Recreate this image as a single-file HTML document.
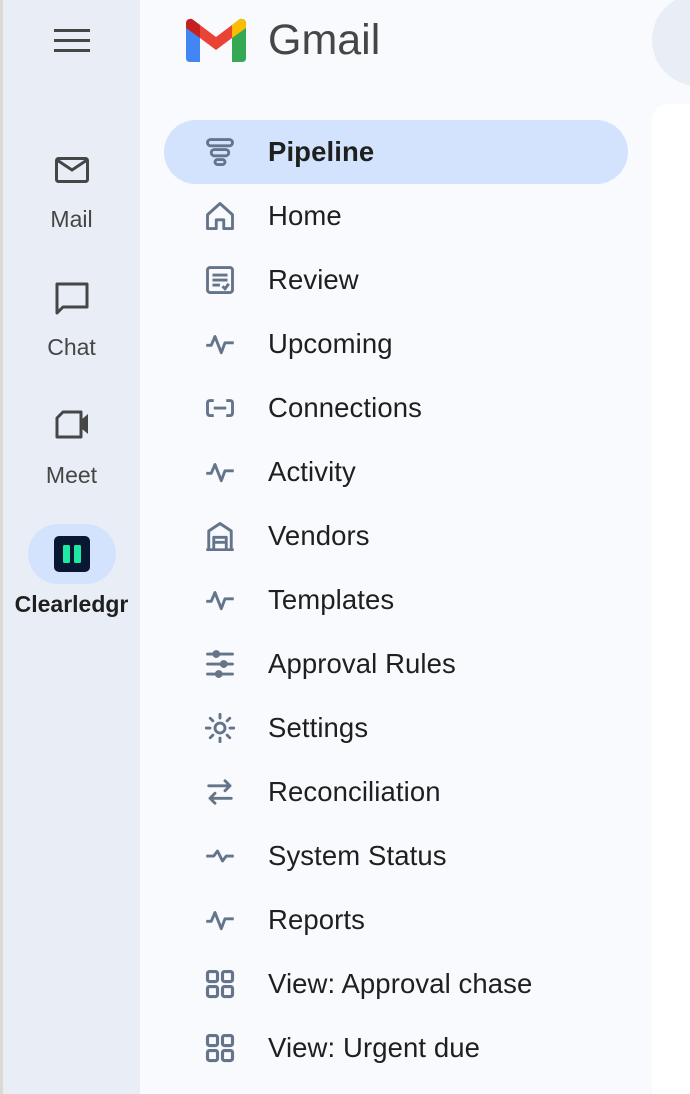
<!DOCTYPE html>
<html><head><style>
*{margin:0;padding:0;box-sizing:border-box}
html,body{width:690px;height:1094px;overflow:hidden}
body{background:#f8fafd;font-family:"Liberation Sans",Arial,sans-serif;position:relative}
.edge{position:absolute;left:0;top:0;width:3px;height:1094px;background:#ddd9d0}
.rail{position:absolute;left:3px;top:0;width:137px;height:1094px;background:#e9eef6}
.ri{position:absolute;left:3px;width:137px;text-align:center;color:#444746;font-size:23px}
.nav{position:absolute;left:164px;width:464px;height:64px;}
.nav svg{position:absolute;left:41px;top:17px}
.nav span{position:absolute;left:104px;top:16px;font-size:27.5px;color:#1f1f1f;letter-spacing:0.1px}
.act{background:#d3e3fd;border-radius:32px}
</style></head><body>
<div class="edge"></div><div class="rail"></div>
<svg style="position:absolute;left:54px;top:29px" width="36" height="24"><g fill="#444746"><rect x="0" y="0" width="36" height="3"/><rect x="0" y="10" width="36" height="3"/><rect x="0" y="20" width="36" height="3"/></g></svg>
<svg style="position:absolute;left:55px;top:157px" width="34" height="26" viewBox="0 0 34 26"><rect x="1.5" y="1.5" width="31" height="23" rx="2" fill="none" stroke="#444746" stroke-width="3"/><path d="M2 3 L17 13 L32 3" fill="none" stroke="#444746" stroke-width="3"/></svg>
<div class="ri" style="top:206px">Mail</div>
<svg style="position:absolute;left:55px;top:282px" width="34" height="34" viewBox="0 0 34 34"><path d="M2 2 H32 V25 H8 L2 31 Z" fill="none" stroke="#444746" stroke-width="3" stroke-linejoin="round"/></svg>
<div class="ri" style="top:334px">Chat</div>
<svg style="position:absolute;left:55px;top:410px" width="36" height="30" viewBox="0 0 36 30"><path d="M8 2 H26 V27 H2 V8 Z" fill="none" stroke="#444746" stroke-width="3" stroke-linejoin="round"/><path d="M26 10 L33 4 V24 L26 18Z" fill="#444746"/></svg>
<div class="ri" style="top:462px">Meet</div>
<div style="position:absolute;left:28px;top:524px;width:88px;height:60px;border-radius:30px;background:#d3e3fd"></div>
<svg style="position:absolute;left:54px;top:536px" width="36" height="36"><rect width="36" height="36" rx="5" fill="#0a1733"/><rect x="9" y="9" width="7" height="18" rx="1.5" fill="#1de9a5"/><rect x="20" y="9" width="7" height="18" rx="1.5" fill="#1de9a5"/></svg>
<div class="ri" style="top:591px;color:#1f1f1f;font-weight:bold;font-size:23px">Clearledgr</div>

<svg style="position:absolute;left:186px;top:18px" width="60" height="44" viewBox="0 0 60 44">
<path d="M0 6 Q0 0 6 1 L14 7 V44 H4 Q0 44 0 40Z" fill="#4285f4"/>
<path d="M46 7 L54 1 Q60 0 60 6 V40 Q60 44 56 44 H46Z" fill="#34a853"/>
<path d="M14 7 L30 19 L46 7 V20 L30 32 L14 20Z" fill="#ea4335"/>
<path d="M0 6 Q0 0 6 1 L14 7 V20 L0 10Z" fill="#c5221f"/>
<path d="M46 7 L54 1 Q60 0 60 6 V10 L46 20Z" fill="#fbbc04"/>
</svg>
<div style="position:absolute;left:268px;top:16px;font-size:43px;color:#444746">Gmail</div>
<div style="position:absolute;left:652px;top:-6px;width:92px;height:92px;border-radius:50%;background:#e9eef6"></div>
<div style="position:absolute;left:652px;top:104px;width:60px;height:990px;border-radius:16px 0 0 0;background:#fff"></div>

<div class="nav act" style="top:120px"><svg width="30" height="30" viewBox="0 0 24 24" fill="none" stroke="#64748b" stroke-width="2.3"><rect x="2" y="2" width="20" height="5" rx="2.5"/><rect x="5" y="10" width="14" height="5" rx="2.5"/><rect x="8" y="18" width="8" height="4" rx="2"/></svg><span style="font-weight:bold">Pipeline</span></div>
<div class="nav" style="top:184px"><svg width="30" height="30" viewBox="0 0 24 24" fill="none" stroke="#64748b" stroke-width="2.3" stroke-linejoin="round"><path d="M2 11 L12 2 L22 11 V22 H15 V15 H9 V22 H2Z"/></svg><span>Home</span></div>
<div class="nav" style="top:248px"><svg width="30" height="30" viewBox="0 0 24 24" fill="none" stroke="#64748b" stroke-width="2.3"><rect x="2" y="2" width="20" height="20" rx="2"/><path d="M6 8H18M6 12H18M6 16H12M14 17L16 19L19 15"/></svg><span>Review</span></div>
<div class="nav" style="top:312px"><svg width="30" height="30" viewBox="0 0 24 24" fill="none" stroke="#64748b" stroke-width="2.3" stroke-linejoin="round"><path d="M1 13H5L8 6L13 19L16 11H23"/></svg><span>Upcoming</span></div>
<div class="nav" style="top:376px"><svg width="30" height="30" viewBox="0 0 24 24" fill="none" stroke="#64748b" stroke-width="2.3"><path d="M7 6H4Q2 6 2 8V16Q2 18 4 18H7M17 6H20Q22 6 22 8V16Q22 18 20 18H17M7 12H17"/></svg><span>Connections</span></div>
<div class="nav" style="top:440px"><svg width="30" height="30" viewBox="0 0 24 24" fill="none" stroke="#64748b" stroke-width="2.3" stroke-linejoin="round"><path d="M1 13H5L8 6L13 19L16 11H23"/></svg><span>Activity</span></div>
<div class="nav" style="top:504px"><svg width="30" height="30" viewBox="0 0 24 24" fill="none" stroke="#64748b" stroke-width="2.3" stroke-linejoin="round"><path d="M3 22V8L12 2L21 8V22M1 23H23M7 22V13H17V22M7 17H17"/></svg><span>Vendors</span></div>
<div class="nav" style="top:568px"><svg width="30" height="30" viewBox="0 0 24 24" fill="none" stroke="#64748b" stroke-width="2.3" stroke-linejoin="round"><path d="M1 13H5L8 6L13 19L16 11H23"/></svg><span>Templates</span></div>
<div class="nav" style="top:632px"><svg width="30" height="30" viewBox="0 0 24 24" fill="none" stroke="#64748b" stroke-width="2.3" stroke-linecap="round"><path d="M2 4H22M2 12H22M2 20H22"/><circle cx="9" cy="4" r="2" fill="#64748b"/><circle cx="15" cy="12" r="2" fill="#64748b"/><circle cx="11" cy="20" r="2" fill="#64748b"/></svg><span>Approval Rules</span></div>
<div class="nav" style="top:696px"><svg width="30" height="30" viewBox="0 0 24 24" fill="none" stroke="#64748b" stroke-width="2.3" stroke-linecap="round"><circle cx="12" cy="12" r="4"/><path d="M12 1V4M12 20V23M1 12H4M20 12H23M4.2 4.2L6.3 6.3M17.7 17.7L19.8 19.8M4.2 19.8L6.3 17.7M17.7 6.3L19.8 4.2"/></svg><span>Settings</span></div>
<div class="nav" style="top:760px"><svg width="30" height="30" viewBox="0 0 24 24" fill="none" stroke="#64748b" stroke-width="2.3" stroke-linecap="round" stroke-linejoin="round"><path d="M3 7H20M16 3L20 7L16 11M21 17H4M8 13L4 17L8 21"/></svg><span>Reconciliation</span></div>
<div class="nav" style="top:824px"><svg width="30" height="30" viewBox="0 0 24 24" fill="none" stroke="#64748b" stroke-width="2.3" stroke-linejoin="round"><path d="M1 12H7L10 8L14 16L17 12H23"/></svg><span>System Status</span></div>
<div class="nav" style="top:888px"><svg width="30" height="30" viewBox="0 0 24 24" fill="none" stroke="#64748b" stroke-width="2.3" stroke-linejoin="round"><path d="M1 13H5L8 6L13 19L16 11H23"/></svg><span>Reports</span></div>
<div class="nav" style="top:952px"><svg width="30" height="30" viewBox="0 0 24 24" fill="none" stroke="#64748b" stroke-width="2.5"><rect x="2" y="2" width="8" height="8" rx="1.5"/><rect x="14" y="2" width="8" height="8" rx="1.5"/><rect x="2" y="14" width="8" height="8" rx="1.5"/><rect x="14" y="14" width="8" height="8" rx="1.5"/></svg><span>View: Approval chase</span></div>
<div class="nav" style="top:1016px"><svg width="30" height="30" viewBox="0 0 24 24" fill="none" stroke="#64748b" stroke-width="2.5"><rect x="2" y="2" width="8" height="8" rx="1.5"/><rect x="14" y="2" width="8" height="8" rx="1.5"/><rect x="2" y="14" width="8" height="8" rx="1.5"/><rect x="14" y="14" width="8" height="8" rx="1.5"/></svg><span>View: Urgent due</span></div>
</body></html>
